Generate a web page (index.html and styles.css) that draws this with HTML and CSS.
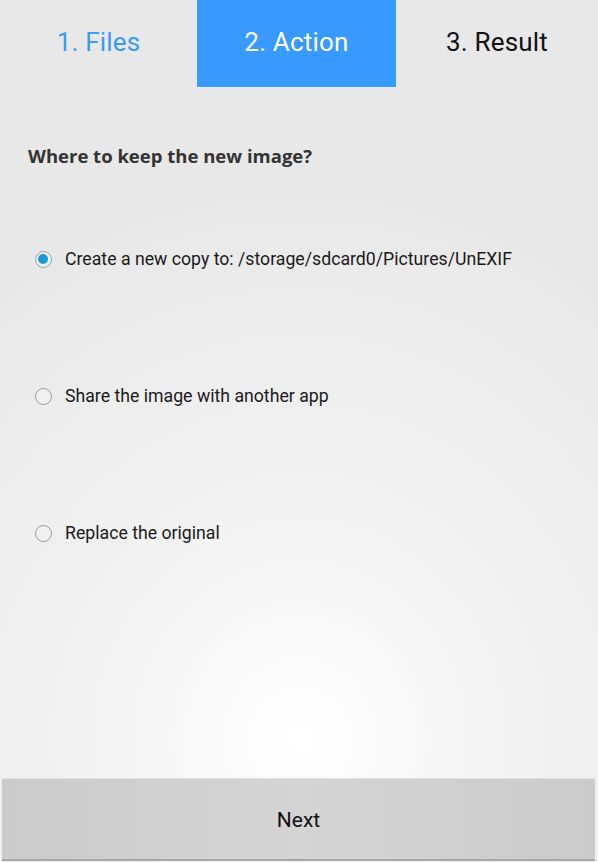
FILE: index.html
```html
<!DOCTYPE html>
<html>
<head>
<meta charset="utf-8">
<link rel="stylesheet" href="styles.css">
</head>
<body>
<div class="app">
  <div class="tabs">
    <div class="tab done">1. Files</div>
    <div class="tab active">2. Action</div>
    <div class="tab">3. Result</div>
  </div>
  <div class="content">
    <h1 class="title">Where to keep the new image?</h1>
    <div class="options">
      <div class="option">
        <span class="radio checked"></span>
        <span class="label">Create a new copy to: /storage/sdcard0/Pictures/UnEXIF</span>
      </div>
      <div class="option">
        <span class="radio"></span>
        <span class="label">Share the image with another app</span>
      </div>
      <div class="option">
        <span class="radio"></span>
        <span class="label">Replace the original</span>
      </div>
    </div>
  </div>
  <div class="footer">
    <div class="next">Next</div>
  </div>
</div>
</body>
</html>
```

FILE: styles.css
```css
html, body {
  margin: 0;
  padding: 0;
  height: 100%;
}
body {
  font-family: Roboto, "Noto Sans", sans-serif;
  background: radial-gradient(ellipse 520px 560px at 300px 740px, #ffffff 0%, #f3f3f3 40%, #e8e8e8 100%);
  background-color: #e8e8e8;
}
.app {
  width: 598px;
  height: 862px;
  display: flex;
  flex-direction: column;
}
.tabs {
  display: grid;
  grid-template-columns: 197px 199px 202px;
  height: 87px;
}
.tab {
  display: flex;
  align-items: center;
  justify-content: center;
  font-size: 26px;
  letter-spacing: 0.2px;
  color: #111;
  padding-bottom: 4px;
}
.tab.done {
  color: #3b9bf2;
}
.tab.active {
  background: #3899ff;
  color: #fff;
}
.content {
  flex: 1;
  padding: 0 28px;
}
.title {
  margin: 57px 0 0 0;
  font-family: "Open Sans", sans-serif;
  font-weight: bold;
  font-size: 18.5px;
  color: #333;
  line-height: 24px;
}
.options {
  margin-top: 79px;
  display: flex;
  flex-direction: column;
  gap: 113px;
}
.option {
  display: flex;
  align-items: center;
  height: 24px;
}
.radio {
  box-sizing: border-box;
  width: 17px;
  height: 17px;
  border-radius: 50%;
  border: 1.5px solid #9a9a9a;
  background: #f0f0f0;
  margin-left: 7px;
  margin-right: 13px;
  position: relative;
  flex: none;
}
.radio.checked {
  border-color: #8fa4ae;
}
.radio.checked::after {
  content: "";
  position: absolute;
  left: 2px;
  top: 2px;
  width: 10px;
  height: 10px;
  border-radius: 50%;
  background: #1a9ad6;
}
.label {
  font-size: 17.7px;
  color: #1a1a1a;
}
.footer {
  padding: 0 3px 1px 2px;
}
.next {
  height: 83px;
  background: linear-gradient(to right, #cbcbcb 0%, #d4d4d4 50%, #cbcbcb 100%);
  border-top: 1px solid #e2e2e2;
  border-bottom: 2px solid #a8a8a8;
  display: flex;
  align-items: center;
  justify-content: center;
  font-size: 21px;
  color: #111;
  padding-top: 1px;
  box-sizing: border-box;
}
```
